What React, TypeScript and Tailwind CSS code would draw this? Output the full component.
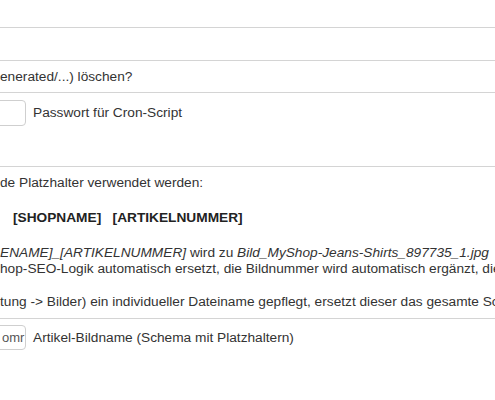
import React from "react";

export default function App() {
  const font = { fontFamily: '"Liberation Sans", Arial, sans-serif' };
  return (
    <div
      className="w-[495px] h-[400px] overflow-hidden bg-white text-[13.7px] leading-[16px] text-[#333]"
      style={font}
    >
      <div className="h-[27px]" />
      <div className="h-[33px] border-t border-[#d4d4d4]" />
      <div className="h-[32px] border-t border-[#d4d4d4] flex items-center whitespace-nowrap">
        <span className="pt-[1px]">enerated/...) löschen?</span>
      </div>
      <div className="h-[74px] border-t border-[#d4d4d4] pt-[7px]">
        <div className="flex items-center">
          <div className="ml-[-14px] w-[40px] h-[26px] border border-[#cfcfcf] rounded-[4px] bg-white shrink-0" />
          <span className="ml-[7px] whitespace-nowrap">Passwort für Cron-Script</span>
        </div>
      </div>
      <div className="h-[152px] border-t border-[#d4d4d4] whitespace-nowrap">
        <div className="mt-[8px]">de Platzhalter verwendet werden:</div>
        <div className="mt-[19px] ml-[13px] font-bold text-[#222]">
          [SHOPNAME]&nbsp;&nbsp;&nbsp;[ARTIKELNUMMER]
        </div>
        <div className="mt-[19px]">
          <i>ENAME]_[ARTIKELNUMMER]</i> wird zu <i>Bild_MyShop-Jeans-Shirts_897735_1.jpg</i>
        </div>
        <div>hop-SEO-Logik automatisch ersetzt, die Bildnummer wird automatisch ergänzt, die</div>
        <div className="mt-[17px]">
          tung -&gt; Bilder) ein individueller Dateiname gepflegt, ersetzt dieser das gesamte Schema
        </div>
      </div>
      <div className="border-t border-[#d4d4d4] pt-[6px]">
        <div className="flex items-center">
          <div className="ml-[-14px] w-[40px] h-[25px] border border-[#cfcfcf] rounded-[4px] bg-white shrink-0 flex items-center overflow-hidden">
            <div className="ml-[15px] w-[24px] overflow-hidden whitespace-nowrap text-[13px] text-[#555]">omr</div>
          </div>
          <span className="ml-[7px] whitespace-nowrap">Artikel-Bildname (Schema mit Platzhaltern)</span>
        </div>
      </div>
    </div>
  );
}
